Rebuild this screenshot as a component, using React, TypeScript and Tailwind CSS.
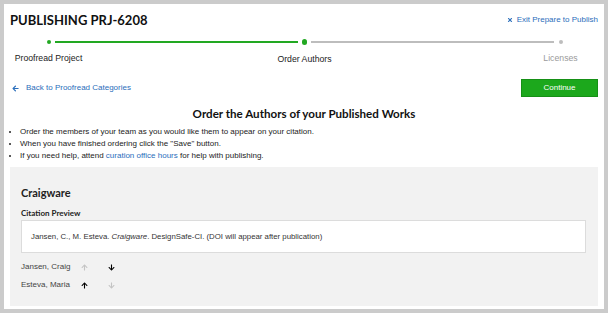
import { FaArrowDown, FaArrowLeft, FaArrowUp, FaTimes } from 'react-icons/fa';

const body = "font-['Liberation_Sans',Arial,sans-serif]";
const head = "font-['Lato','Liberation_Sans',sans-serif]";

function Stepper() {
  return (
    <div className="ml-[42px] w-[517px]">
      {/* dots and connecting lines */}
      <div className="flex items-center gap-[4px] h-[8px]">
        <div className="w-[5px] flex justify-center">
          <span className="block w-[4px] h-[4px] rounded-full bg-[#22a822]" />
        </div>
        <div className="flex-1 h-[2px] bg-[#22a822]" />
        <div className="w-[5px] flex justify-center">
          <span className="block w-[6px] h-[6px] rounded-full bg-[#22a822]" />
        </div>
        <div className="flex-1 h-[2px] bg-[#bdbdbd]" />
        <div className="w-[5px] flex justify-center">
          <span className="block w-[4px] h-[4px] rounded-full bg-[#bdbdbd]" />
        </div>
      </div>
      {/* labels, centred under each dot */}
      <div className={`flex gap-[4px] mt-[7px] text-[8.7px] leading-[10px] ${body}`}>
        <div className="w-[5px] flex justify-center whitespace-nowrap text-[#222]">Proofread Project</div>
        <div className="flex-1" />
        <div className="w-[5px] flex justify-center whitespace-nowrap text-[#222] pt-[1px]">Order Authors</div>
        <div className="flex-1" />
        <div className="w-[5px] flex justify-center whitespace-nowrap text-[#9a9a9a]">Licenses</div>
      </div>
    </div>
  );
}

function AuthorRow({ name, upOn, downOn }: { name: string; upOn: boolean; downOn: boolean }) {
  return (
    <div className="flex items-center h-[18px]">
      <span className="w-[60px] text-[#444]">{name}</span>
      <FaArrowUp className={`w-[7px] h-[7px] ${upOn ? 'text-black' : 'text-[#c4c4c4]'}`} />
      <span className="w-[20px]" />
      <FaArrowDown className={`w-[7px] h-[7px] ${downOn ? 'text-black' : 'text-[#c4c4c4]'}`} />
    </div>
  );
}

export default function App() {
  return (
    <div className="w-[608px] h-[313px] bg-[#cbcbcb] p-[4px]">
      <div className="w-[600px] h-[305px] bg-white flex flex-col">
        {/* Header */}
        <div className="flex items-center justify-between pl-[6px] pr-[6px] pt-[3px] h-[29px]">
          <h1 className={`${head} font-bold text-[13px] leading-[18px] text-[#111]`}>
            PUBLISHING PRJ-6208
          </h1>
          <a className={`${body} flex items-center gap-[4px] text-[8px] text-[#2a6ebb]`}>
            <FaTimes className="w-[6px] h-[6px]" />
            Exit Prepare to Publish
          </a>
        </div>

        <div className="mt-[5px]">
          <Stepper />
        </div>

        {/* Back link + Continue */}
        <div className="flex items-center justify-between pl-[8px] pr-[6px] mt-[15px]">
          <a className={`${body} flex items-center gap-[7px] text-[8px] text-[#2a6ebb]`}>
            <FaArrowLeft className="w-[7px] h-[7px]" />
            Back to Proofread Categories
          </a>
          <button className={`${body} w-[77px] h-[18px] bg-[#1ca81c] border border-[#169016] text-white text-[8px]`}>
            Continue
          </button>
        </div>

        <h2 className={`${head} font-bold text-[11.6px] leading-[14px] text-[#111] text-center mt-[10px]`}>
          Order the Authors of your Published Works
        </h2>

        <ul className={`${body} text-[8px] leading-[12px] text-[#222] list-disc pl-[16px] mt-[5px]`}>
          <li>Order the members of your team as you would like them to appear on your citation.</li>
          <li>When you have finished ordering click the "Save" button.</li>
          <li>
            If you need help, attend <a className="text-[#2a6ebb]">curation office hours</a> for help with publishing.
          </li>
        </ul>

        {/* Project panel */}
        <div className={`${body} mx-[6px] mt-[5px] bg-[#f2f2f2] px-[11px] pt-[19px] pb-[12px] text-[8px]`}>
          <h3 className={`${head} font-bold text-[11px] leading-[14px] text-[#222]`}>Craigware</h3>
          <div className={`${head} font-bold text-[8px] leading-[10px] text-[#222] mt-[8px]`}>Citation Preview</div>
          <div className="mt-[2px] mr-[1px] h-[33px] bg-white border border-[#dcdcdc] flex items-center pl-[9px] text-[#333] text-[7.8px]">
            <span>
              Jansen, C., M. Esteva. <i>Craigware</i>. DesignSafe-CI. (DOI will appear after publication)
            </span>
          </div>
          <div className="mt-[5px]">
            <AuthorRow name="Jansen, Craig" upOn={false} downOn={true} />
            <AuthorRow name="Esteva, Maria" upOn={true} downOn={false} />
          </div>
        </div>
      </div>
    </div>
  );
}
